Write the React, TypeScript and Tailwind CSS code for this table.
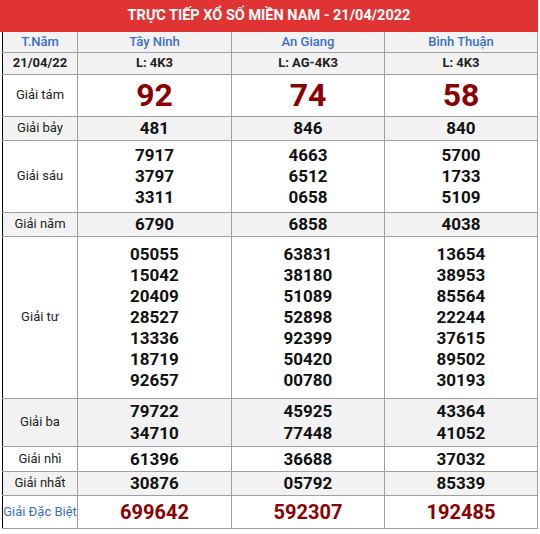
import React from 'react';

type Row = {
  label: string;
  nums: string[][];
  bg: string;
  h: string;
  kind?: 'big' | 'special';
  lh?: string;
};

const PROVINCES = [
  { name: 'Tây Ninh', code: 'L: 4K3' },
  { name: 'An Giang', code: 'L: AG-4K3' },
  { name: 'Bình Thuận', code: 'L: 4K3' },
];

const ROWS: Row[] = [
  { label: 'Giải tám', nums: [['92'], ['74'], ['58']], bg: 'bg-white', h: 'h-[42px]', kind: 'big' },
  { label: 'Giải bảy', nums: [['481'], ['846'], ['840']], bg: 'bg-[#f2f2f2]', h: 'h-[24px]' },
  {
    label: 'Giải sáu',
    nums: [['7917', '3797', '3311'], ['4663', '6512', '0658'], ['5700', '1733', '5109']],
    bg: 'bg-white',
    h: 'h-[72px]',
    lh: 'leading-[21px]',
  },
  { label: 'Giải năm', nums: [['6790'], ['6858'], ['4038']], bg: 'bg-[#f2f2f2]', h: 'h-[24px]' },
  {
    label: 'Giải tư',
    nums: [
      ['05055', '15042', '20409', '28527', '13336', '18719', '92657'],
      ['63831', '38180', '51089', '52898', '92399', '50420', '00780'],
      ['13654', '38953', '85564', '22244', '37615', '89502', '30193'],
    ],
    bg: 'bg-white',
    h: 'h-[162px]',
    lh: 'leading-[21px]',
  },
  {
    label: 'Giải ba',
    nums: [['79722', '34710'], ['45925', '77448'], ['43364', '41052']],
    bg: 'bg-[#f2f2f2]',
    h: 'h-[48px]',
    lh: 'leading-[22px]',
  },
  { label: 'Giải nhì', nums: [['61396'], ['36688'], ['37032']], bg: 'bg-white', h: 'h-[25px]' },
  { label: 'Giải nhất', nums: [['30876'], ['05792'], ['85339']], bg: 'bg-[#f2f2f2]', h: 'h-[24px]' },
  { label: 'Giải Đặc Biệt', nums: [['699642'], ['592307'], ['192485']], bg: 'bg-white', h: 'h-[33px]', kind: 'special' },
];

export default function App() {
  return (
    <div className="w-[538px] bg-white font-['Roboto','Liberation_Sans',sans-serif] text-[#222]">
      {/* Title bar */}
      <div className="flex h-[32px] items-center justify-center bg-[#e03434] text-[14.5px] font-bold text-white">
        TRỰC TIẾP XỔ SỐ MIỀN NAM - 21/04/2022
      </div>

      <table className="ml-[2px] w-[535px] table-fixed border-collapse border-l border-l-black text-center">
        <colgroup>
          <col className="w-[75px]" />
          <col className="w-[154px]" />
          <col className="w-[153px]" />
          <col className="w-[153px]" />
        </colgroup>
        <tbody>
          <tr className="h-[19px] bg-[#f2f2f2]">
            <td className="border border-[#a0a0a0] border-t-0 border-l-black text-[13px] font-medium text-[#3a6fc4]">T.Năm</td>
            {PROVINCES.map(p => (
              <td key={p.name} className="border border-[#a0a0a0] border-t-0 text-[13px] font-medium text-[#3a6fc4]">{p.name}</td>
            ))}
          </tr>
          <tr className="h-[22px] bg-[#f2f2f2]">
            <td className="border border-[#a0a0a0] border-l-black text-[13px] font-bold">21/04/22</td>
            {PROVINCES.map(p => (
              <td key={p.name} className="border border-[#a0a0a0] text-[13px] font-bold">{p.code}</td>
            ))}
          </tr>
          {ROWS.map(row => (
            <tr key={row.label} className={`${row.bg} ${row.h}`}>
              <td
                className={`border border-[#a0a0a0] border-l-black text-[13px] ${
                  row.kind === 'special' ? 'text-[#3a6fc4]' : 'text-[#222]'
                }`}
              >
                {row.label}
              </td>
              {row.nums.map((col, i) => (
                <td key={i} className="border border-[#a0a0a0] align-middle">
                  {col.map(n => (
                    <div
                      key={n}
                      className={
                        row.kind === 'big'
                          ? 'text-[32px] font-bold leading-[36px] text-[#8b0000]'
                          : row.kind === 'special'
                          ? 'text-[20px] font-bold leading-[24px] text-[#8b0000]'
                          : `text-[17px] font-bold text-[#111] ${row.lh ?? 'leading-[20px]'}`
                      }
                    >
                      {n}
                    </div>
                  ))}
                </td>
              ))}
            </tr>
          ))}
        </tbody>
      </table>
    </div>
  );
}
